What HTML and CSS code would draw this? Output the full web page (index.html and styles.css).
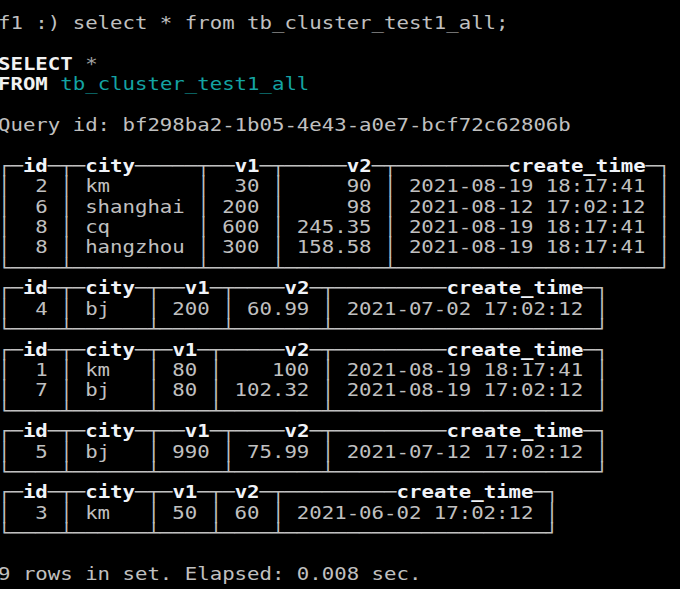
FILE: index.html
```html
<!DOCTYPE html>
<html>
<head>
<meta charset="utf-8">
<link rel="stylesheet" href="styles.css">
</head>
<body>
<pre class="term">f1 :) select * from tb_cluster_test1_all;

<b class="kw">SELECT</b> <span class="dim">*</span>
<b class="kw">FROM</b> <span class="ident">tb_cluster_test1_all</span>

Query id: bf298ba2-1b05-4e43-a0e7-bcf72c62806b

┌─<b class="h">id</b>─┬─<b class="h">city</b>─────┬──<b class="h">v1</b>─┬─────<b class="h">v2</b>─┬─────────<b class="h">create_time</b>─┐
│  2 │ km       │  30 │     90 │ 2021-08-19 18:17:41 │
│  6 │ shanghai │ 200 │     98 │ 2021-08-12 17:02:12 │
│  8 │ cq       │ 600 │ 245.35 │ 2021-08-19 18:17:41 │
│  8 │ hangzhou │ 300 │ 158.58 │ 2021-08-19 18:17:41 │
└────┴──────────┴─────┴────────┴─────────────────────┘
┌─<b class="h">id</b>─┬─<b class="h">city</b>─┬──<b class="h">v1</b>─┬────<b class="h">v2</b>─┬─────────<b class="h">create_time</b>─┐
│  4 │ bj   │ 200 │ 60.99 │ 2021-07-02 17:02:12 │
└────┴──────┴─────┴───────┴─────────────────────┘
┌─<b class="h">id</b>─┬─<b class="h">city</b>─┬─<b class="h">v1</b>─┬─────<b class="h">v2</b>─┬─────────<b class="h">create_time</b>─┐
│  1 │ km   │ 80 │    100 │ 2021-08-19 18:17:41 │
│  7 │ bj   │ 80 │ 102.32 │ 2021-08-19 17:02:12 │
└────┴──────┴────┴────────┴─────────────────────┘
┌─<b class="h">id</b>─┬─<b class="h">city</b>─┬──<b class="h">v1</b>─┬────<b class="h">v2</b>─┬─────────<b class="h">create_time</b>─┐
│  5 │ bj   │ 990 │ 75.99 │ 2021-07-12 17:02:12 │
└────┴──────┴─────┴───────┴─────────────────────┘
┌─<b class="h">id</b>─┬─<b class="h">city</b>─┬─<b class="h">v1</b>─┬─<b class="h">v2</b>─┬─────────<b class="h">create_time</b>─┐
│  3 │ km   │ 50 │ 60 │ 2021-06-02 17:02:12 │
└────┴──────┴────┴────┴─────────────────────┘

9 rows in set. Elapsed: 0.008 sec.
</pre>
</body>
</html>
```
FILE: styles.css
```css
html, body {
  margin: 0;
  padding: 0;
  background: #000;
  overflow: hidden;
  height: 100%;
}

.term {
  margin: 0 0 0 -2px;
  padding: 13px 0 0 0;
  width: max-content;
  font-family: "DejaVu Sans Mono", "Liberation Mono", monospace;
  font-size: 18px;
  line-height: 20.4px;
  color: #c0c0c0;
  transform: scaleX(1.149);
  transform-origin: 0 0;
}

.kw {
  color: #f2f2f2;
  font-weight: bold;
}

.dim {
  color: #a0a0a0;
}

.ident {
  color: #14a3a3;
}

.h {
  color: #f0f3f8;
  font-weight: bold;
}
```
